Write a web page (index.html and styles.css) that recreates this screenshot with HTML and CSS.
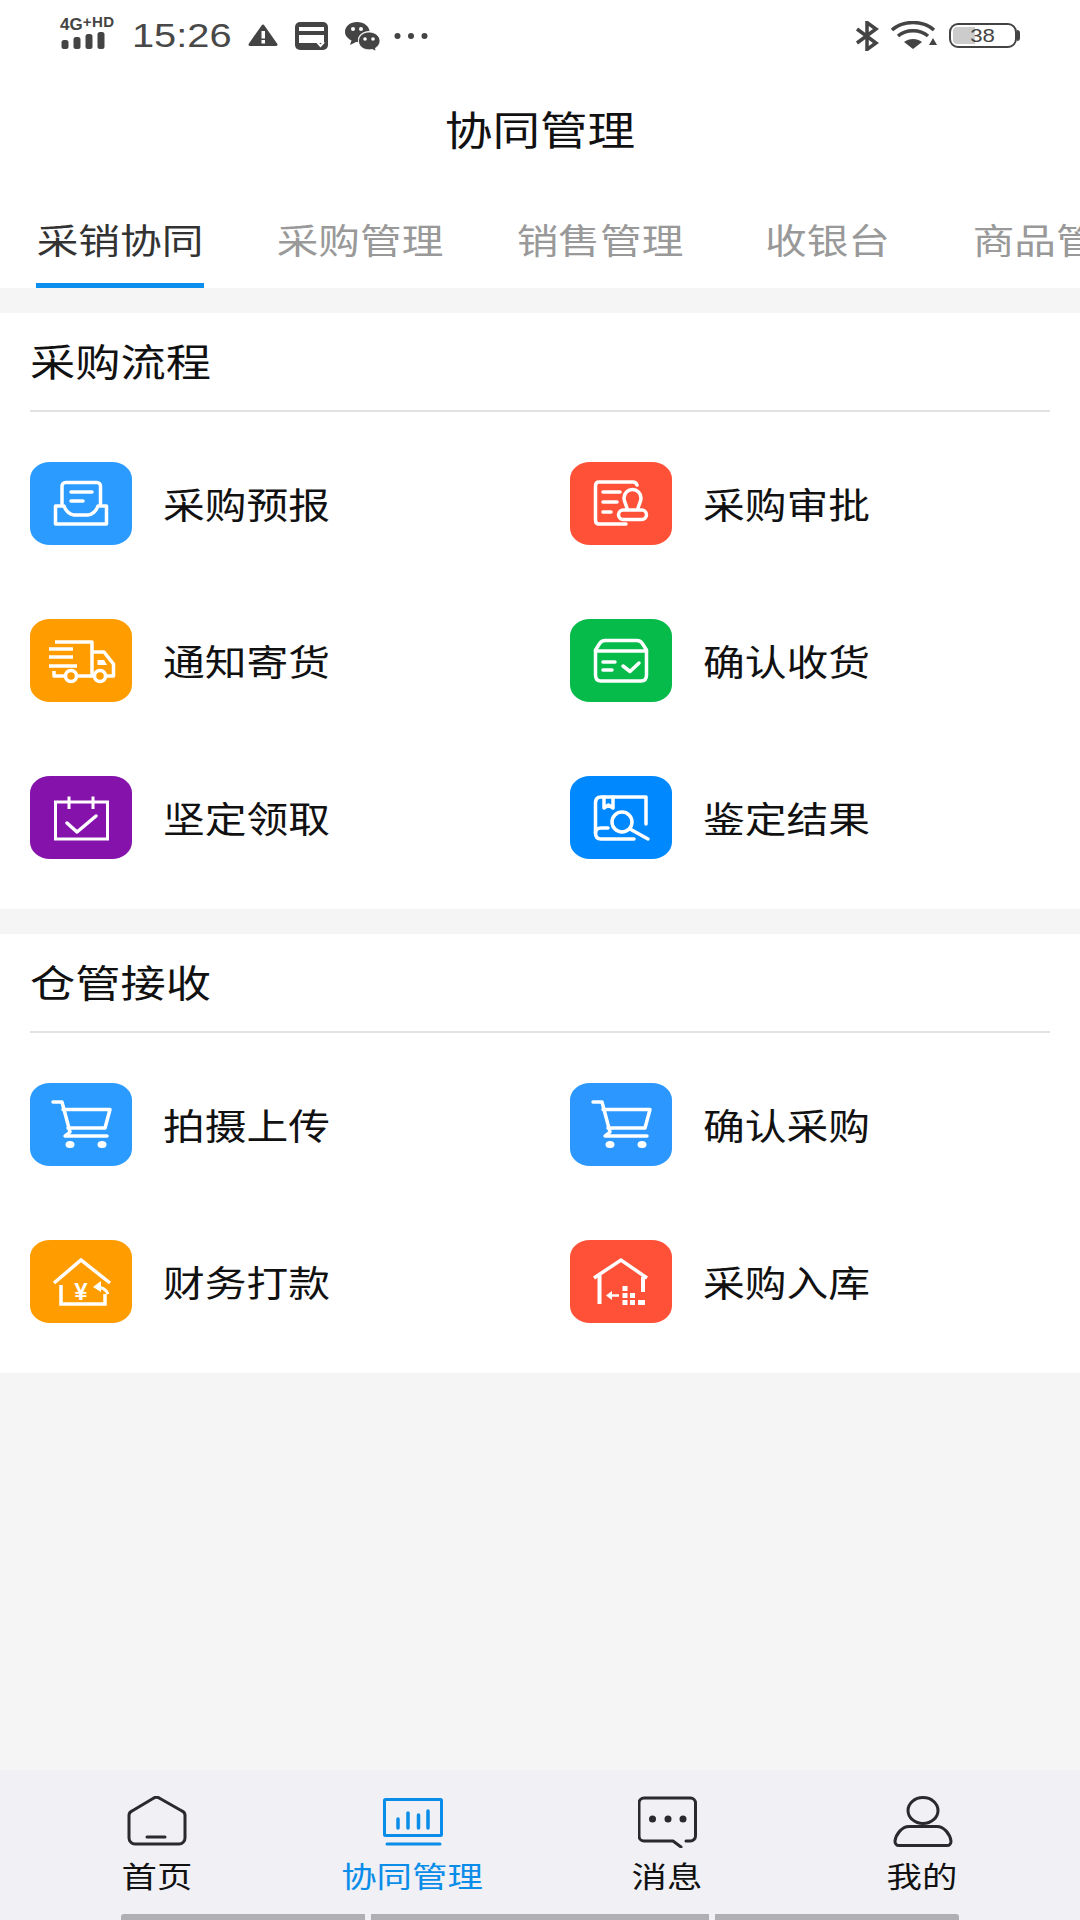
FILE: index.html
```html
<!DOCTYPE html>
<html>
<head>
    <title>协同管理</title>
    <link rel="stylesheet" href="styles.css">
</head>
<body>
<div class="page">
    <div class="status-bar">
        <div class="signal">
            <span class="signal-text">4G<small class="signal-small">+HD</small></span>
            <svg width="44" height="18" viewBox="0 0 44 18" fill="#444"><rect x="0.500" y="8" width="7" height="9" rx="2.500"/><rect x="12.500" y="5" width="7" height="12" rx="2.500"/><rect x="24.500" y="2" width="7" height="15" rx="2.500"/><rect x="36.500" y="0" width="7" height="17" rx="2.500"/></svg>
        </div>
        <div class="clock"><span class="wide-left">15:26</span></div>
        <svg class="warn-icon" width="30" height="22" viewBox="0 0 30 22"><path d="M15 2 L28 20.500 H2Z" fill="#444" stroke="#444" stroke-width="3" stroke-linejoin="round"/><rect x="13.500" y="7" width="3.500" height="7.500" fill="#fff"/><rect x="13.500" y="16" width="3.500" height="3.500" fill="#fff"/></svg>
        <svg class="card-icon" width="34" height="28" viewBox="0 0 34 28"><rect width="33" height="28" rx="5" fill="#444"/><rect x="4" y="5" width="25" height="4" fill="#fff"/><rect x="4" y="13" width="25" height="8" fill="#fff"/><path d="M22 20 L25.500 24 L29 20" stroke="#fff" stroke-width="2" fill="none"/></svg>
        <svg class="chat-icon" width="35" height="29" viewBox="0 0 35 29"><path d="M12 0 C19 0 24 4 24.500 9 C18 9 12 13 13 20 L11 20 L5 23 L6.500 18.500 C2.500 16.500 0 13.500 0 10 C0 4 5.500 0 12 0Z" fill="#444"/><path d="M24 10 C30 10 35 14 35 19 C35 22 33 24.500 30.500 26 L31 29 L27 27.500 C20 29 13.500 25 13.500 19 C13.500 14 18 10 24 10Z" fill="#444" stroke="#fff" stroke-width="0.800"/><circle cx="8" cy="7" r="2" fill="#fff"/><circle cx="16" cy="7" r="2" fill="#fff"/><circle cx="20" cy="17" r="1.800" fill="#fff"/><circle cx="28" cy="17" r="1.800" fill="#fff"/></svg>
        <svg class="more-icon" width="34" height="8" viewBox="0 0 34 8" fill="#444"><circle cx="3.500" cy="4" r="3"/><circle cx="17" cy="4" r="3"/><circle cx="30.500" cy="4" r="3"/></svg>
        <div class="status-right">
            <svg width="24" height="30" viewBox="0 0 24 30" fill="none" stroke="#444" stroke-width="3.500"><path d="M2 8 L21 22 L12 28.500 V1.500 L21 8 L2 22"/></svg>
            <svg class="wifi-icon" width="46" height="30" viewBox="0 0 46 30"><g fill="none" stroke="#444" stroke-width="3.500"><path d="M1 9 C12 -1 32 -1 43 9"/><path d="M7 15 C15 8 29 8 37 15"/></g><path d="M13 21 C18 17 26 17 31 21 L22 28Z" fill="#444"/><path d="M42 17 L46 24 H38Z" fill="#444"/></svg>
            <div class="battery">
                <div class="battery-fill"></div>
                <span class="battery-num">38</span>
            </div>
            <div class="battery-tip"></div>
        </div>
    </div>

    <div class="title-bar"><span class="wide">协同管理</span></div>

    <div class="tabs">
        <div class="tab active"><span class="wide">采销协同</span></div>
        <div class="tab"><span class="wide">采购管理</span></div>
        <div class="tab"><span class="wide">销售管理</span></div>
        <div class="tab short"><span class="wide">收银台</span></div>
        <div class="tab"><span class="wide">商品管理</span></div>
    </div>

    <div class="content">
        <div class="panel">
            <div class="panel-title"><span class="wide-left">采购流程</span></div>
            <div class="grid">
                <div class="item">
                    <div class="tile blue">
                        <svg width="102" height="83" viewBox="0 0 102 83" fill="none" stroke="#fff" stroke-width="3.500" stroke-linejoin="round" stroke-linecap="round"><path d="M32 42 V24 a3.500 3.500 0 0 1 3.500-3.500 H67 a3.500 3.500 0 0 1 3.500 3.500 V42"/><path d="M25.500 44 H34 q3 8 10 9 H58 q7-1 10-9 H76.500 V62 H25.500Z"/><path d="M41 30 H62 M41 39 H53"/></svg>
                    </div>
                    <span class="item-label">采购预报</span>
                </div>
                <div class="item">
                    <div class="tile red">
                        <svg width="102" height="83" viewBox="0 0 102 83" fill="none" stroke="#fff" stroke-width="3.500" stroke-linecap="round" stroke-linejoin="round"><path d="M67 23 Q66 20 63 20 H29 Q25.500 20 25.500 24 V58 Q25.500 62 29 62 H56"/><path d="M33 30 H50 M33 40 H47 M33 50 H41"/><path d="M57 47 C57 43 54 41 54 36 A8.500 8.500 0 0 1 71 36 C71 41 68 43 68 47"/><rect x="48.500" y="48" width="28" height="9.500" rx="4.700"/></svg>
                    </div>
                    <span class="item-label">采购审批</span>
                </div>
                <div class="item">
                    <div class="tile orange">
                        <svg width="102" height="83" viewBox="0 0 102 83" fill="none" stroke="#fff" stroke-width="3.500" stroke-linejoin="round"><path d="M25 23 H62 V57 H48 M34 57 H24 V52"/><path d="M19 30 H43 M19 38 H43 M19 47 H47"/><path d="M62 33 H74 L83.500 45 V57 H76 M62 57 H64"/><circle cx="41" cy="57" r="5.500"/><circle cx="70" cy="57" r="5.500"/><path d="M67.500 41 H74 L77 46 H67.500Z" fill="#fff" stroke="none"/></svg>
                    </div>
                    <span class="item-label">通知寄货</span>
                </div>
                <div class="item">
                    <div class="tile green">
                        <svg width="102" height="83" viewBox="0 0 102 83" fill="none" stroke="#fff" stroke-width="3.500" stroke-linecap="round" stroke-linejoin="round"><path d="M35 21.500 H67 Q70 21.500 72 24 L76.500 31 V56 Q76.500 62 71 62 H31 Q25.500 62 25.500 56 V31 L30 24 Q32 21.500 35 21.500Z"/><path d="M25.500 32 H76.500"/><path d="M33 43 H45 M33 51 H42"/><path d="M53 47 L60 52.500 L69 44"/></svg>
                    </div>
                    <span class="item-label">确认收货</span>
                </div>
                <div class="item">
                    <div class="tile purple">
                        <svg width="102" height="83" viewBox="0 0 102 83" fill="none" stroke="#fff" stroke-width="3"><rect x="25.500" y="26" width="52" height="37"/><path d="M39 20.500 V33 M63 20.500 V33"/><path d="M37 47 L47 56 L66 40" stroke-width="3.500" stroke-linecap="round" stroke-linejoin="round"/></svg>
                    </div>
                    <span class="item-label">坚定领取</span>
                </div>
                <div class="item">
                    <div class="tile azure">
                        <svg width="102" height="83" viewBox="0 0 102 83" fill="none" stroke="#fff" stroke-width="3.500" stroke-linecap="round" stroke-linejoin="round"><path d="M76 48 V21 H31 Q25.500 21 25.500 27 V57 Q25.500 63 31 63 H64"/><path d="M25.500 57 Q25.500 52 31 52 H38"/><path d="M34 21 V32 L38.500 29 L43 32 V21"/><circle cx="52" cy="46" r="10"/><path d="M60 53 L78 63"/></svg>
                    </div>
                    <span class="item-label">鉴定结果</span>
                </div>
            </div>
        </div>

        <div class="panel second">
            <div class="panel-title"><span class="wide-left">仓管接收</span></div>
            <div class="grid">
                <div class="item">
                    <div class="tile blue">
                        <svg width="102" height="83" viewBox="0 0 102 83" fill="none" stroke="#fff" stroke-width="3.500" stroke-linecap="round" stroke-linejoin="round"><path d="M23 19 H32 L40 49 L35 53 H77"/><path d="M33 26.500 H80 L75 45 H38"/><ellipse cx="40" cy="61.500" rx="4.500" ry="3.500" fill="#fff" stroke="none"/><ellipse cx="72" cy="61.500" rx="4.500" ry="3.500" fill="#fff" stroke="none"/></svg>
                    </div>
                    <span class="item-label">拍摄上传</span>
                </div>
                <div class="item">
                    <div class="tile azure2">
                        <svg width="102" height="83" viewBox="0 0 102 83" fill="none" stroke="#fff" stroke-width="3.500" stroke-linecap="round" stroke-linejoin="round"><path d="M23 19 H32 L40 49 L35 53 H77"/><path d="M33 26.500 H80 L75 45 H38"/><ellipse cx="40" cy="61.500" rx="4.500" ry="3.500" fill="#fff" stroke="none"/><ellipse cx="72" cy="61.500" rx="4.500" ry="3.500" fill="#fff" stroke="none"/></svg>
                    </div>
                    <span class="item-label">确认采购</span>
                </div>
                <div class="item">
                    <div class="tile orange">
                        <svg width="102" height="83" viewBox="0 0 102 83" fill="none" stroke="#fff" stroke-width="3.500"><path d="M24 43 L51 20 L80 43"/><path d="M31 45 V64 H75 V54"/><text class="yen" x="51" y="60" text-anchor="middle">¥</text><path d="M78 54 C76 49 72 47 66 47" stroke-width="3"/><path d="M71 41 L63 47 L71 52Z" fill="#fff" stroke="none"/></svg>
                    </div>
                    <span class="item-label">财务打款</span>
                </div>
                <div class="item">
                    <div class="tile red">
                        <svg width="102" height="83" viewBox="0 0 102 83" fill="none" stroke="#fff" stroke-width="3.500"><path d="M24 38 L51 20 L77 38"/><path d="M29.500 35 V64 M73 37 V52" stroke-width="4"/><path d="M38 55.500 H49" stroke-width="2.500"/><path d="M42 51 L36 55.500 L42 60Z" fill="#fff" stroke="none"/><g fill="#fff" stroke="none"><rect x="52.500" y="46" width="5" height="5"/><rect x="52.500" y="53" width="5" height="5"/><rect x="60" y="53" width="5" height="5"/><rect x="52.500" y="60" width="5" height="5"/><rect x="60" y="60" width="5" height="5"/><rect x="68" y="60" width="7" height="5"/></g></svg>
                    </div>
                    <span class="item-label">采购入库</span>
                </div>
            </div>
        </div>
    </div>

    <div class="nav">
        <div class="nav-item">
            <svg class="home-icon" width="60" height="52" viewBox="0 0 60 52" fill="none" stroke="#2a2a2e" stroke-width="3" stroke-linecap="round" stroke-linejoin="round"><path d="M5 15 L26 2.500 a6 6 0 0 1 7 0 L55 15 a5 5 0 0 1 3 4 V42 a6 6 0 0 1-6 6 H8 a6 6 0 0 1-6-6 V19 a5 5 0 0 1 3-4Z"/><path d="M20 41 H38"/></svg>
            <span class="nav-label"><span class="wide">首页</span></span>
        </div>
        <div class="nav-item current">
            <svg width="60" height="52" viewBox="0 0 60 52" fill="none" stroke="#0a8ce9" stroke-width="3" stroke-linecap="round"><rect x="1.500" y="3.500" width="57" height="36" rx="1"/><path d="M15 23 V32 M25 17 V32 M35.500 19 V32 M45 15 V32" stroke-width="3.500"/><path d="M4 48 H57"/></svg>
            <span class="nav-label"><span class="wide">协同管理</span></span>
        </div>
        <div class="nav-item">
            <svg width="60" height="52" viewBox="0 0 60 52" fill="none" stroke="#2a2a2e" stroke-width="3" stroke-linecap="round" stroke-linejoin="round"><path d="M48 45 H52 a5 5 0 0 0 5.500-5 V7 a5 5 0 0 0-5-5 H6 a5 5 0 0 0-5 5 V40 a5 5 0 0 0 5 5 H35 L43 51"/><g fill="#2a2a2e" stroke="none"><circle cx="14.500" cy="23" r="3.500"/><circle cx="30" cy="23" r="3.500"/><circle cx="45" cy="23" r="3.500"/></g></svg>
            <span class="nav-label"><span class="wide">消息</span></span>
        </div>
        <div class="nav-item">
            <svg width="60" height="52" viewBox="0 0 60 52" fill="none" stroke="#2a2a2e" stroke-width="3" stroke-linejoin="round"><ellipse cx="30" cy="14.500" rx="15" ry="13"/><path d="M16 30.500 H44 C51 30.500 57 38 58 45 a4 4 0 0 1-4 4.500 H6 a4 4 0 0 1-4-4.500 C3 38 9 30.500 16 30.500Z"/></svg>
            <span class="nav-label"><span class="wide">我的</span></span>
        </div>
    </div>
    <div class="gesture">
        <div class="gesture-bar first"></div>
        <div class="gesture-bar middle"></div>
        <div class="gesture-bar last"></div>
    </div>
</div>
</body>
</html>
```

FILE: styles.css
```css
* {
    box-sizing: border-box;
}

body {
    margin: 0;
    padding: 0;
    font-family: "Noto Sans CJK SC", "Noto Sans", sans-serif;
    background-color: #f5f5f6;
}

.page {
    width: 1080px;
    height: 1920px;
    display: flex;
    flex-direction: column;
    overflow: hidden;
}

/* the screen is stretched sideways, so the text is too */
.wide,
.wide-left {
    display: inline-block;
    transform: scaleX(1.19);
    transform-origin: center center;
}

.wide-left {
    transform-origin: left center;
}

/* status bar */
.status-bar {
    height: 60px;
    padding-left: 60px;
    display: flex;
    align-items: center;
    background-color: #fff;
    color: #444;
    flex-shrink: 0;
}

.signal {
    width: 58px;
    height: 30px;
    margin-top: 6px;
    position: relative;
}

.signal svg {
    position: absolute;
    left: 1px;
    top: 14px;
}

.signal-text {
    position: absolute;
    left: 0;
    top: -2px;
    font-family: "Liberation Sans", sans-serif;
    font-size: 17px;
    line-height: 17px;
    font-weight: bold;
    white-space: nowrap;
}

.signal-small {
    font-size: 15px;
    position: relative;
    top: -3px;
    letter-spacing: 0.5px;
}

.clock {
    width: 100px;
    margin-left: 14px;
    font-family: "Liberation Sans", sans-serif;
    font-size: 34px;
    line-height: 40px;
    margin-top: 10px;
    color: #484848;
}

.clock .wide-left {
    transform: scaleX(1.17);
}

.warn-icon {
    margin-left: 16px;
    margin-top: 10px;
}

.card-icon {
    margin-left: 17px;
    margin-top: 12px;
}

.chat-icon {
    margin-left: 16px;
    margin-top: 12px;
}

.more-icon {
    margin-left: 14px;
    margin-top: 12px;
}

.status-right {
    margin-left: auto;
    padding-right: 60px;
    margin-top: 11px;
    display: flex;
    align-items: center;
}

.wifi-icon {
    margin-left: 12px;
}

.battery {
    width: 68px;
    height: 25px;
    margin-left: 12px;
    border: 2.5px solid #444;
    border-radius: 9px;
    position: relative;
    display: flex;
    align-items: center;
    justify-content: center;
    overflow: hidden;
}

.battery-fill {
    position: absolute;
    left: 2px;
    top: 2px;
    bottom: 2px;
    width: 22px;
    background-color: #ccc;
    border-radius: 4px 0 0 4px;
}

.battery-num {
    position: relative;
    font-family: "Liberation Sans", sans-serif;
    font-size: 19px;
    line-height: 19px;
    color: #444;
    transform: scaleX(1.17);
}

.battery-tip {
    width: 3px;
    height: 11px;
    background-color: #444;
    border-radius: 0 3px 3px 0;
}

/* header and tabs */
.title-bar {
    height: 140px;
    padding-top: 42px;
    background-color: #fff;
    text-align: center;
    font-size: 40px;
    line-height: 52px;
    color: #111;
    flex-shrink: 0;
}

.tabs {
    height: 88px;
    padding-left: 36px;
    display: flex;
    gap: 72px;
    background-color: #fff;
    flex-shrink: 0;
}

.tab {
    width: 168px;
    height: 88px;
    flex-shrink: 0;
    padding-top: 15px;
    text-align: center;
    font-size: 35px;
    line-height: 48px;
    color: #999;
}

.tab.short {
    width: 144px;
}

.tab.active {
    color: #333;
    border-bottom: 5px solid #0a8fef;
}

/* panels */
.content {
    flex: 1;
    padding-top: 25px;
}

.panel {
    background-color: #fff;
}

.panel.second {
    margin-top: 25px;
}

.panel-title {
    height: 99px;
    margin: 0 30px;
    padding-top: 22px;
    border-bottom: 2px solid #e2e2e2;
    font-size: 38px;
    line-height: 50px;
    color: #111;
}

.grid {
    display: grid;
    grid-template-columns: 540px 510px;
    row-gap: 74px;
    padding: 50px 0 50px 30px;
}

.item {
    display: flex;
    align-items: center;
    gap: 31px;
}

.item-label {
    display: inline-block;
    padding-bottom: 2px;
    font-size: 36px;
    line-height: 50px;
    color: #111;
    transform: scaleX(1.16);
    transform-origin: left center;
}

.tile {
    width: 102px;
    height: 83px;
    border-radius: 20px / 17px;
    flex-shrink: 0;
}

.tile svg {
    display: block;
}

.blue { background-color: #2b9bff; }
.azure2 { background-color: #2b97ff; }
.red { background-color: #ff5138; }
.orange { background-color: #ff9d00; }
.green { background-color: #07bb4b; }
.purple { background-color: #8513ab; }
.azure { background-color: #0088ff; }

.yen {
    font-family: "Liberation Sans", sans-serif;
    font-size: 24px;
    font-weight: bold;
    fill: #fff;
    stroke: none;
}

/* bottom nav */
.nav {
    height: 144px;
    padding: 26px 30px 0;
    display: grid;
    grid-template-columns: repeat(4, 255px);
    background-color: #f0f0f5;
    flex-shrink: 0;
}

.nav-item {
    display: flex;
    flex-direction: column;
    align-items: center;
    color: #111;
}

.nav-item.current {
    color: #0a8ce9;
}

.home-icon {
    margin-right: 2px;
}

.nav-label {
    margin-top: 7px;
    font-size: 29px;
    line-height: 40px;
}

.nav-label .wide {
    transform: scaleX(1.22);
}

.gesture {
    height: 6px;
    padding-left: 121px;
    display: flex;
    gap: 6px;
    background-color: #f0f0f5;
    flex-shrink: 0;
}

.gesture-bar {
    height: 6px;
    background-color: #b0b0b4;
}

.gesture-bar.first {
    width: 244px;
    border-radius: 3px 0 0 0;
}

.gesture-bar.middle {
    width: 338px;
}

.gesture-bar.last {
    width: 244px;
    border-radius: 0 3px 0 0;
}
```
